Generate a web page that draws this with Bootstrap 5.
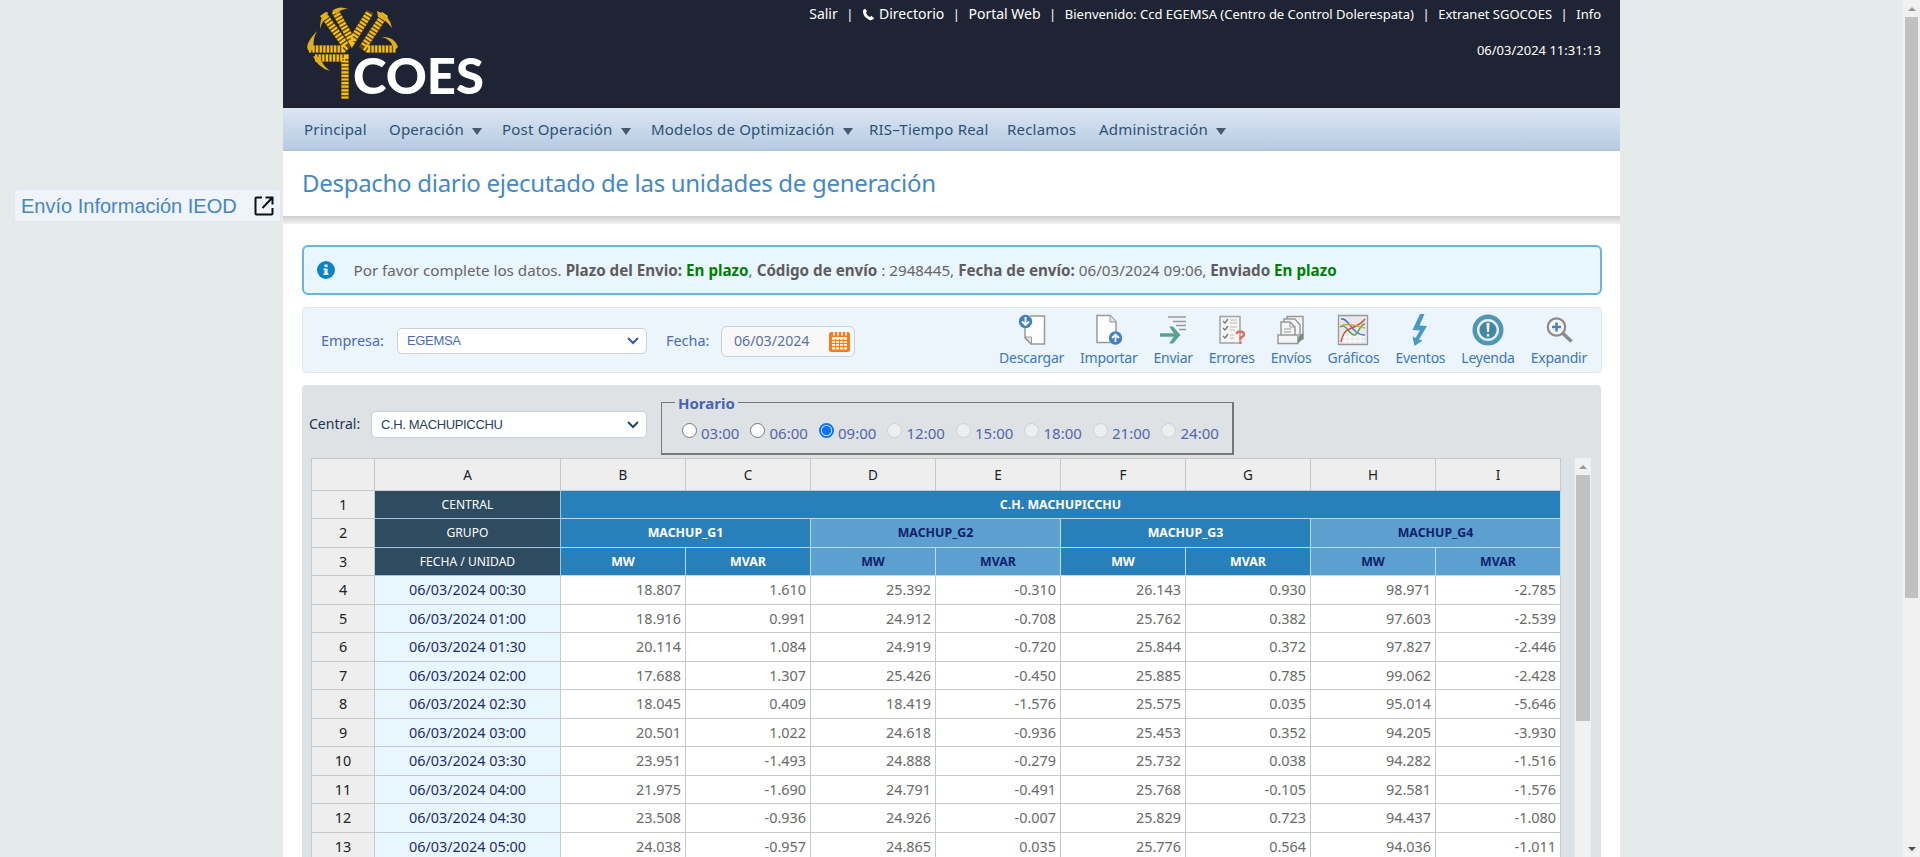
<!DOCTYPE html>
<html lang="es">
<head>
<meta charset="utf-8">
<meta name="viewport" content="width=device-width, initial-scale=1">
<title>Extranet COES</title>
<link href="https://cdn.jsdelivr.net/npm/bootstrap@5.3.0/dist/css/bootstrap.min.css" rel="stylesheet">
<style>
body{background:#e5eaea;font-family:"Noto Sans","Open Sans",sans-serif;font-size:14px;line-height:20px;color:#666;height:857px;overflow:hidden}
.side{width:283px;padding:189px 2px 0 14px}
.side-link{height:33px;background:#eef4fa;border:1px solid #dfe6f2;border-radius:3px;font:20px/31px "Liberation Sans",sans-serif;color:#4686c3;padding:1px 6px 0 6px}
.shell{width:1337px;background:#fff}
.topbar{height:108px;background:#1f2434;color:#fff;padding:0 19px 0 20px}
.toplinks{font-size:13px;height:28px;white-space:nowrap}
.toplinks .big{font-size:14px}
.toplinks .sep{padding:0 8.5px}
.clock{font-size:13px;margin-top:12px}
.menu{height:43px;background:linear-gradient(#dce6f3,#b6cbe2);border-bottom:2px solid #b0c4da;font-size:15px;letter-spacing:.2px;color:#2b5277;padding-left:21px;white-space:nowrap}
.caret-d{display:inline-block;border:5px solid transparent;border-top:7px solid #46586b;border-bottom:0}
.ttl{height:65px;font-size:24px;line-height:64px;letter-spacing:-.29px;color:#4589c4;padding-left:19px;margin:0;font-weight:400;white-space:nowrap}
.shade{height:8px;background:linear-gradient(#cfcfcf,#f1f1f1)}
.msg{margin:21px 18px 0 19px;height:50px;border:2px solid #69b5e0;border-radius:6px;background:#e8f6ff;padding-left:13px;white-space:nowrap;font-size:15.2px}
.msg .body-txt{margin-left:18.5px}
.msg b{color:#5d5d5d}.msg b.ok{color:#008000}
.tools{margin:12px 18px 0 19px;height:66px;background:#ecf4fc;border:1px solid #dfe9f3;border-radius:4px;color:#4a69bd}
.filters{padding:2px 0 0 18px;font-size:14.4px}
.pick{background:#fff;border:1px solid #c9d0d8;border-radius:5px;font:13px/24px "Liberation Sans",sans-serif;letter-spacing:-.35px;padding:0 7px 0 9px}
.datebox{width:134px;height:31px;background:#f8f8f8;border:1px solid #c6d3de;border-radius:6px;padding:0 4px 0 12px;color:#596fa6;font-size:14.2px}
.tool{color:#3c78ba;text-align:center;white-space:nowrap;letter-spacing:-.25px}
.tool svg{display:block;margin:0 auto}
.tool div{line-height:20px;margin-top:2px}
.panel{margin:12px 19px 0;height:473px;background:#dee2e5;border-radius:4px 4px 0 0}
.hours{width:573px;height:53px;border:2px solid #73777b;border-width:1.5px 2px 2px 1.5px;margin:17px 0 0 14px;position:relative;color:#5266ad;font-size:15px}
.hours .cap{position:absolute;left:13px;top:-9px;background:#dee2e5;padding:0 3px;font-weight:700;color:#4a62b4;line-height:18px}
.hours .opts{padding:20px 0 0 19.5px}
.hr-opt{width:68.5px}
.dot{width:15px;height:15px;border-radius:50%;border:1.5px solid #767676;background:#fff;margin:0 4.5px 5px 0}
.dot.off{border-color:#cfd2d4;background:#eceeef}
.dot.on{border:2px solid #0b74f5;background:radial-gradient(circle,#0b74f5 4.2px,#fff 5.2px)}
.sheet{margin:3px 0 0 9px;border-collapse:separate;border-spacing:0;table-layout:fixed;width:1250px}
.sheet td{border:0 solid #c5c9cc;border-width:0 1px 1px 0;padding:0 4px 0 0;text-align:right;background:#fff;height:28px;font-size:14.4px;line-height:20px;color:#6a6a6a;white-space:nowrap}
.sheet tr:nth-child(odd) td{height:29px}
.sheet tr:first-child td{height:33px;border-top-width:1px;background:#eee;color:#222;text-align:center;padding:0;font-size:13.5px}
.sheet td:first-child{border-left-width:1px;background:#eee;color:#222;text-align:center;padding:0}
.sheet tr td.fec{background:#e8f6ff;color:#1f2c6c;text-align:center;padding:0}
.sheet tr td.navy{background:#2e4b60;color:#fff;text-align:center;padding:0;font-size:12.1px;border-color:#9fc3dd}
.sheet tr td.blu{background:#2880ba;color:#fff;font-weight:700;text-align:center;padding:0;font-size:12.4px;border-color:#b9dcf2}
.sheet tr td.sky{background:#5ba0cf;color:#12206c;font-weight:700;text-align:center;padding:0;font-size:12.4px;border-color:#b9dcf2}
.track{background:#f1f1f1}
.track i{display:block}
.grid-track{width:16px;height:399px;margin:3px 0 0 14px;padding:7px 1px 0}
.grid-track .up{width:0;margin:0 0 6px 3px;border:4px solid transparent;border-bottom-color:#999;border-top:0}
.grid-track .thumb{height:246px;background:#c1c1c1}
.page-track{width:17px;padding:7px 0 6px}
.page-track .up{border:4px solid transparent;border-bottom-color:#999;border-top:0;margin-bottom:6px}
.page-track .thumb{height:581px;width:13px;background:#c1c1c1}
.page-track .down{border:4px solid transparent;border-top-color:#505050;border-bottom:0}
</style>
</head>
<body>
<div class="d-flex h-100">
  <aside class="side flex-shrink-0"><div class="side-link d-flex justify-content-between align-items-center"><span>Envío Información IEOD</span>
    <svg width="20" height="20" viewBox="0 0 20 20" fill="none" stroke="#111" stroke-width="2"><path d="M8 1.500H2.500Q1.500 1.500 1.500 2.500V17.500Q1.500 18.500 2.500 18.500H17.500Q18.500 18.500 18.500 17.500V12M11.500 1.500H18.500V8.500M18.500 1.500L8.500 12"/></svg></div></aside>
  <main class="shell flex-shrink-0 overflow-hidden">
    <header class="topbar d-flex justify-content-between">
      <svg width="190" height="108" viewBox="303 0 190 108">
        <g fill="none" stroke="#5d4415" stroke-width="8"><path d="M323 14L346 46L343 49H309"/><path d="M335 11L352 41L370 12"/><path d="M385 14L364 46L368 49H396"/><path d="M315 58H345V99"/></g>
        <g fill="none" stroke="#f6c015" stroke-width="7" stroke-dasharray="2.200 1.400"><path d="M323 14L346 46L343 49H309"/><path d="M335 11L352 41L370 12"/><path d="M385 14L364 46L368 49H396"/><path d="M315 58H345V99"/></g>
        <path d="M332 11Q339 5 348 9Q340 9 337 14ZM320 29Q320 14 328 12L327 17Q323 19 320 29ZM377 11Q390 15 392 28Q385 19 378 17ZM382 37Q394 36 398 47L394 51Q392 39 382 37ZM309 51Q303 46 317 31Q312 40 314 50ZM313 56Q317 67 330 71Q322 65 320 57Z" fill="#dcae20"/>
        <text x="353" y="93.500" font-family="Lato, sans-serif" font-weight="900" font-size="49" fill="#fff" textLength="131" lengthAdjust="spacingAndGlyphs">COES</text>
      </svg>
      <div>
        <div class="toplinks d-flex align-items-center justify-content-end">
          <span class="big">Salir</span><span class="sep">|</span>
          <svg width="13" height="13" viewBox="0 0 13 13" class="me-1"><path d="M3.200.8L.9 2.200Q.3 8.500 7.500 12Q9.500 13 12.300 10.300L9.500 8L7.700 9Q4.500 7.500 4 4.500L5 3.200Z" fill="#fff"/></svg><span class="big">Directorio</span><span class="sep">|</span>
          <span class="big">Portal Web</span><span class="sep">|</span><span>Bienvenido: Ccd EGEMSA (Centro de Control Dolerespata)</span><span class="sep">|</span><span>Extranet SGOCOES</span><span class="sep">|</span><span>Info</span>
        </div>
        <div class="clock text-end">06/03/2024 11:31:13</div>
      </div>
    </header>
    <nav class="menu d-flex align-items-center">
      <span style="width:85px">Principal</span>
      <span style="width:113px">Operación <i class="caret-d ms-1"></i></span>
      <span style="width:149px">Post Operación <i class="caret-d ms-1"></i></span>
      <span style="width:218px">Modelos de Optimización <i class="caret-d ms-1"></i></span>
      <span style="width:138px">RIS–Tiempo Real</span>
      <span style="width:92px">Reclamos</span>
      <span>Administración <i class="caret-d ms-1"></i></span>
    </nav>
    <h1 class="ttl">Despacho diario ejecutado de las unidades de generación</h1>
    <div class="shade"></div>
    <div class="msg d-flex align-items-center">
      <svg width="18" height="18" viewBox="0 0 18 18" class="flex-shrink-0"><circle cx="9" cy="9" r="9" fill="#0b84cb"/><path d="M7.500 3.500H10.500V6H7.500ZM6.500 7.500H10.500V12.500H11.500V14H6.500V12.500H7.500V9H6.500Z" fill="#fff"/></svg>
      <div class="body-txt">Por favor complete los datos. <b>Plazo del Envio:</b> <b class="ok">En plazo</b>, <b>Código de envío</b> : 2948445, <b>Fecha de envío:</b> 06/03/2024 09:06, <b>Enviado</b> <b class="ok">En plazo</b></div>
    </div>
    <section class="tools d-flex justify-content-between">
      <div class="filters d-flex align-items-center">
        <span style="width:76px">Empresa:</span>
        <div class="pick d-flex justify-content-between align-items-center" style="width:250px"><span>EGEMSA</span><svg width="12" height="8" viewBox="0 0 12 8" fill="none" stroke="#3658b8" stroke-width="2"><path d="M1 1L6 6L11 1"/></svg></div>
        <span style="width:55px;margin-left:19px">Fecha:</span>
        <div class="datebox d-flex justify-content-between align-items-center"><span>06/03/2024</span>
          <svg width="21" height="21" viewBox="0 0 21 21"><rect y="1" width="21" height="20" rx="2.500" fill="#f47c20"/><path d="M3 6H18V18.500H3Z" fill="#fff" opacity=".9"/><path d="M3 9.500H18M3 12.500H18M3 15.500H18M6.700 8V18.500M10.500 8V18.500M14.300 8V18.500" stroke="#f47c20"/><path d="M5 0V4.500M9 0V4.500M13 0V4.500M17 0V4.500" stroke="#fff" stroke-width="1.500"/></svg></div>
      </div>
      <div class="d-flex gap-3" style="padding:6px 14px 0 0">
        <div class="tool"><svg width="32" height="32" viewBox="0 0 32 32"><path d="M14 2H28.500V30H15L9 24V12" fill="#fff" stroke="#999" stroke-width="1.500"/><path d="M9 23H15.500V30Z" fill="#e5e5e5" stroke="#999"/><circle cx="9.500" cy="7.500" r="6.700" fill="#4380bd"/><path d="M9.500 3V11M6 7.500L9.500 11L13 7.500" fill="none" stroke="#fff" stroke-width="1.800"/></svg><div>Descargar</div></div>
        <div class="tool"><svg width="32" height="32" viewBox="0 0 32 32"><path d="M4 1.500H17L23 7.500V28.500H4Z" fill="#fff" stroke="#999" stroke-width="1.500"/><path d="M17 1.500V8H23" fill="#e5e5e5" stroke="#999"/><circle cx="22.500" cy="24" r="6.700" fill="#4380bd"/><path d="M22.500 28V20.500M19 24L22.500 20.500L26 24" fill="none" stroke="#fff" stroke-width="1.800"/></svg><div>Importar</div></div>
        <div class="tool"><svg width="32" height="32" viewBox="0 0 32 32" fill="none"><path d="M11 3H29M16 7.500H29M19 11.500H29M22 15.500H29" stroke="#999" stroke-width="1.300"/><path d="M3 21H20" stroke="#59a38e" stroke-width="3.500"/><path d="M12 12.500H16L23.500 21L16 29.500H12L18 21Z" fill="#59a38e"/></svg><div>Enviar</div></div>
        <div class="tool"><svg width="32" height="32" viewBox="0 0 32 32" fill="none"><path d="M4 2.500H24V29H4Z" fill="#f5f5f5" stroke="#a2a2a2" stroke-width="1.500"/><path d="M7 7L9 9L12 5M7 14L9 16L12 12M7 22L9 24L12 20" stroke="#777" stroke-width="1.300"/><path d="M14 6H21M14 9H21M14 13H21M14 16H19M14 21H18M14 24H18" stroke="#bbb"/><path d="M20.500 20Q21 17.500 24 17.500Q28 17.500 28 20.500Q28 22.500 24.500 23.500V26M24.500 27.500V30" stroke="#df6e5e" stroke-width="2.300"/></svg><div>Errores</div></div>
        <div class="tool"><svg width="32" height="32" viewBox="0 0 32 32" fill="#f4f4f4" stroke="#999" stroke-width="1.500"><path d="M12 2.500H28V25H12Z"/><path d="M9 5H20L25 11V25H9Z"/><path d="M6 8H15L20 13V24H6Z"/><path d="M15 8V13H20M9 15H16M9 18H16" fill="none" stroke-width="1"/><path d="M3 21H23V29.500H3Z"/><path d="M23 29Q22 22 28 19Q30 25 23 29Z" fill="#75917c" stroke="none"/></svg><div>Envíos</div></div>
        <div class="tool"><svg width="32" height="32" viewBox="0 0 32 32" fill="none"><path d="M1.500 1.500H30.500V30.500H1.500Z" fill="#e8e8e8" stroke="#999" stroke-width="1.300"/><path d="M4 23H28M4 27H28M8 20V29M13 20V29M18 20V29M23 20V29" stroke="#fff"/><path d="M4 5C12 3 14 21 28 21" stroke="#4a7dc0" stroke-width="1.500"/><path d="M3 13C9 8 12 22 18 21C23 18 22 11 28 10" stroke="#55a05c" stroke-width="1.500"/><path d="M4 28C8 9 18 18 28 5" stroke="#cc4c40" stroke-width="1.500"/><path d="M5 11C14 9 19 12 28 14" stroke="#d5a63d" stroke-width="1.300"/></svg><div>Gráficos</div></div>
        <div class="tool"><svg width="32" height="32" viewBox="0 0 32 32"><path d="M16 0H20.500L15.500 11.500L23 12L15 25.500L18.500 26.500L10.500 32L8.500 22.500L11.500 24L16 16.500L8.500 16Z" fill="#479ac0"/></svg><div>Eventos</div></div>
        <div class="tool"><svg width="32" height="32" viewBox="0 0 32 32"><circle cx="16" cy="16" r="15.500" fill="#4f97b5"/><circle cx="16" cy="16" r="11" fill="#e7f1f5"/><circle cx="16" cy="16" r="8.600" fill="#4387a5"/><path d="M14.500 9H17.500L17 18H15ZM14.800 20H17.200V22.500H14.800Z" fill="#fff"/></svg><div>Leyenda</div></div>
        <div class="tool"><svg width="32" height="32" viewBox="0 0 32 32" fill="none"><circle cx="13.500" cy="13" r="8.700" fill="#f4f8fc" stroke="#8b8b8b" stroke-width="2.200"/><path d="M20 19.500L28.500 27.500" stroke="#8b8b8b" stroke-width="3.500"/><path d="M13.500 8.500V17.500M9 13H18" stroke="#4a80c4" stroke-width="2.600"/></svg><div>Expandir</div></div>
      </div>
    </section>
    <section class="panel">
      <div class="d-flex" style="height:70px">
        <span style="width:62px;margin:29px 0 0 7px;color:#1d3550">Central:</span>
        <div class="pick d-flex justify-content-between align-items-center" style="width:276px;height:27px;margin-top:26px;color:#27445c"><span>C.H. MACHUPICCHU</span><svg width="12" height="8" viewBox="0 0 12 8" fill="none" stroke="#1f4a63" stroke-width="2"><path d="M1 1L6 6L11 1"/></svg></div>
        <div class="hours"><span class="cap">Horario</span><div class="opts d-flex" id="hours"></div></div>
      </div>
      <div class="d-flex align-items-start">
        <table class="sheet flex-shrink-0"><colgroup><col style="width:64px"><col style="width:186px"><col span="8" style="width:125px"></colgroup><tbody id="sheet"></tbody></table>
        <div class="track grid-track"><i class="up"></i><i class="thumb"></i></div>
      </div>
    </section>
  </main>
  <div class="flex-grow-1"></div>
  <div class="track page-track d-flex flex-column align-items-center"><i class="up"></i><i class="thumb"></i><i class="down mt-auto"></i></div>
</div>
<script src="https://cdn.jsdelivr.net/npm/bootstrap@5.3.0/dist/js/bootstrap.bundle.min.js"></script>
<script>
const data = `00:30 18.807 1.610 25.392 -0.310 26.143 0.930 98.971 -2.785
01:00 18.916 0.991 24.912 -0.708 25.762 0.382 97.603 -2.539
01:30 20.114 1.084 24.919 -0.720 25.844 0.372 97.827 -2.446
02:00 17.688 1.307 25.426 -0.450 25.885 0.785 99.062 -2.428
02:30 18.045 0.409 18.419 -1.576 25.575 0.035 95.014 -5.646
03:00 20.501 1.022 24.618 -0.936 25.453 0.352 94.205 -3.930
03:30 23.951 -1.493 24.888 -0.279 25.732 0.038 94.282 -1.516
04:00 21.975 -1.690 24.791 -0.491 25.768 -0.105 92.581 -1.576
04:30 23.508 -0.936 24.926 -0.007 25.829 0.723 94.437 -1.080
05:00 24.038 -0.957 24.865 0.035 25.776 0.564 94.036 -1.011`.split('\n').map(r => r.split(' '));
const groups = ['blu','sky','blu','sky'];
let h = '<tr><td></td>' + [...'ABCDEFGHI'].map(c => `<td>${c}</td>`).join('') + '</tr>';
h += '<tr><td>1</td><td class="navy">CENTRAL</td><td class="blu" colspan="8">C.H. MACHUPICCHU</td></tr>';
h += '<tr><td>2</td><td class="navy">GRUPO</td>' + groups.map((g, i) => `<td class="${g}" colspan="2">MACHUP_G${i + 1}</td>`).join('') + '</tr>';
h += '<tr><td>3</td><td class="navy">FECHA / UNIDAD</td>' + groups.map(g => `<td class="${g}">MW</td><td class="${g}">MVAR</td>`).join('') + '</tr>';
data.forEach((r, i) => { h += `<tr><td>${i + 4}</td><td class="fec">06/03/2024 ${r[0]}</td>` + r.slice(1).map(v => `<td>${v}</td>`).join('') + '</tr>'; });
document.getElementById('sheet').innerHTML = h;
document.getElementById('hours').innerHTML = ['03:00','06:00','09:00','12:00','15:00','18:00','21:00','24:00'].map((t, i) => `<span class="hr-opt d-flex align-items-center"><i class="dot ${i === 2 ? 'on' : i > 2 ? 'off' : ''}"></i><span>${t}</span></span>`).join('');
</script>
</body>
</html>
